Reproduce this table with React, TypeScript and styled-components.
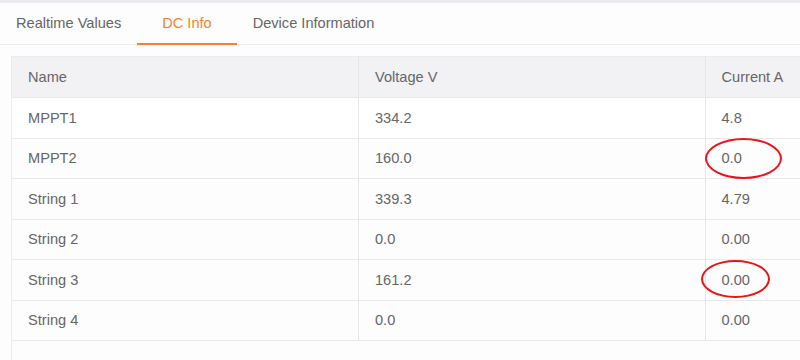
import React from "react";
import styled, { createGlobalStyle } from "styled-components";

const GlobalStyle = createGlobalStyle`
  html, body {
    margin: 0;
    padding: 0;
    background: #fcfdfc;
    overflow: hidden;
  }
  body {
    font-family: "Liberation Sans", Arial, sans-serif;
    font-size: 14.6px;
    color: #666;
  }
`;

const tabs = ["Realtime Values", "DC Info", "Device Information"];

const rows = [
  { name: "MPPT1", voltage: "334.2", current: "4.8" },
  { name: "MPPT2", voltage: "160.0", current: "0.0", mark: "wide" },
  { name: "String 1", voltage: "339.3", current: "4.79" },
  { name: "String 2", voltage: "0.0", current: "0.00" },
  { name: "String 3", voltage: "161.2", current: "0.00", mark: "narrow" },
  { name: "String 4", voltage: "0.0", current: "0.00" },
];

function App() {
  return (
    <Page>
      <GlobalStyle />
      <TabBar>
        {tabs.map((t) => (
          <Tab key={t} $active={t === "DC Info"}>
            {t}
          </Tab>
        ))}
      </TabBar>
      <Body>
        <TableWrap>
          <Table>
            <thead>
              <tr>
                <Th>Name</Th>
                <Th>Voltage V</Th>
                <Th>Current A</Th>
              </tr>
            </thead>
            <tbody>
              {rows.map((r) => (
                <tr key={r.name}>
                  <Td>{r.name}</Td>
                  <Td>{r.voltage}</Td>
                  <Td>
                    {r.current}
                    {r.mark && <Mark $variant={r.mark} />}
                  </Td>
                </tr>
              ))}
            </tbody>
          </Table>
        </TableWrap>
      </Body>
    </Page>
  );
}

export default App;

const Page = styled.div`
  width: 800px;
  height: 360px;
  display: flex;
  flex-direction: column;
  border-top: 3px solid #ebebef;
  box-sizing: border-box;
  overflow: hidden;
`;

const TabBar = styled.div`
  display: flex;
  flex-shrink: 0;
  height: 41px;
  background: #fcfdfc;
  border-bottom: 1px solid #eeeef0;
`;

const Tab = styled.div<{ $active?: boolean }>`
  display: flex;
  align-items: center;
  padding: 0 ${({ $active }) => ($active ? "25px" : "16px")};
  color: ${({ $active }) => ($active ? "#f5822d" : "#666")};
  border-bottom: 2px solid ${({ $active }) => ($active ? "#f5822d" : "transparent")};
  margin-bottom: -1px;
`;

const Body = styled.div`
  flex: 1;
  display: flex;
  padding: 11px 0 0 11px;
`;

const TableWrap = styled.div`
  flex: 1;
  border-left: 1px solid #ececee;
`;

const Table = styled.table`
  width: 1040px;
  border-collapse: collapse;
  table-layout: fixed;
`;

const Th = styled.th`
  height: 40px;
  padding: 0 16px;
  background: #f2f2f5;
  font-weight: normal;
  text-align: left;
  border-right: 1px solid #e6e6e8;
  border-top: 1px solid #ececee;
`;

const Td = styled.td`
  position: relative;
  height: 39.5px;
  padding: 0 16px;
  background: #fcfdfc;
  border-top: 1px solid #e9e9eb;
  border-bottom: 1px solid #e9e9eb;
  border-right: 1px solid #e6e6e8;
  tr:first-child > & {
    background: #fff;
  }
`;

const Mark = styled.span<{ $variant: string }>`
  position: absolute;
  border: 2px solid #e8141a;
  border-radius: 50%;
  box-sizing: border-box;
  left: ${({ $variant }) => ($variant === "wide" ? "-1px" : "-5px")};
  top: ${({ $variant }) => ($variant === "wide" ? "-1px" : "0px")};
  width: ${({ $variant }) => ($variant === "wide" ? "77px" : "69px")};
  height: ${({ $variant }) => ($variant === "wide" ? "41px" : "38px")};
`;
